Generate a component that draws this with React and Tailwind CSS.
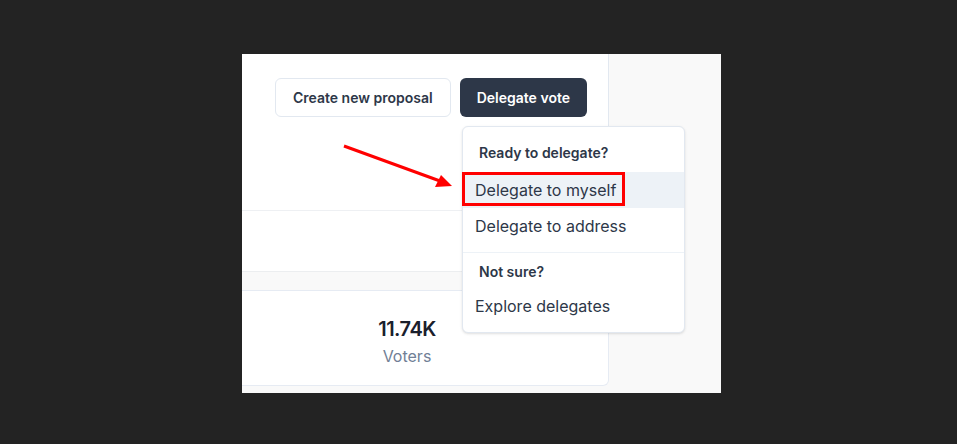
export default function App() {
  return (
    <div
      className="min-h-screen w-full bg-[#232323] pt-[54px] pl-[242px]"
      style={{ fontFamily: 'Inter, "Noto Sans", sans-serif' }}
    >
      <div className="relative flex w-[479px] h-[339px] bg-[#f9f9f9]">
        {/* main column */}
        <div className="flex w-[367px] flex-col">
          <div className="h-[157px] border-r border-b border-r-[#e2e8f0] border-b-[#eef0f3] bg-white">
            <div className="flex justify-end gap-[9px] pt-[24px] pr-[21px]">
              <button className="h-[39px] rounded-[6px] border border-[#e2e8f0] bg-white px-[17px] text-[14px] font-semibold text-[#2d3748]">
                Create new proposal
              </button>
              <button className="h-[39px] rounded-[6px] bg-[#2d3748] px-[17px] text-[14px] font-semibold text-white">
                Delegate vote
              </button>
            </div>
          </div>
          <div className="h-[60px] border-r border-[#e2e8f0] bg-white" />
          <div className="h-[19px] border-t border-[#eceef0] bg-[#f9f9f9]" />
          <div className="flex h-[96px] flex-col items-center justify-center rounded-br-[6px] border-t border-r border-b border-[#e6ebf3] bg-white pt-[6px] pr-[36px]">
            <div className="text-[20px] font-semibold tracking-[-0.5px] text-[#1a202c]">11.74K</div>
            <div className="text-[16px] text-[#718096]">Voters</div>
          </div>
        </div>
        <div className="flex-1" />

        {/* dropdown menu */}
        <div className="absolute left-[220px] top-[72px] w-[223px] rounded-[6px] border border-[#e2e8f0] bg-white py-[8px] shadow-sm">
          <div className="px-[16px] pt-[7px] pb-[9px] text-[14px] font-semibold text-[#2d3748]">
            Ready to delegate?
          </div>
          <div className="flex h-[36px] items-center bg-[#edf2f7] px-[12px] text-[16px] text-[#2d3748]">
            Delegate to myself
          </div>
          <div className="flex h-[36px] items-center px-[12px] text-[16px] text-[#2d3748]">
            Delegate to address
          </div>
          <div className="my-[8px] border-t border-[#edf2f7]" />
          <div className="px-[16px] pb-[6px] text-[14px] font-semibold text-[#2d3748]">
            Not sure?
          </div>
          <div className="flex h-[36px] items-center px-[12px] text-[16px] text-[#2d3748]">
            Explore delegates
          </div>
        </div>

        {/* annotation: highlight box */}
        <div className="pointer-events-none absolute left-[220px] top-[118px] h-[34px] w-[163px] border-[3px] border-[#ff0000]" />

        {/* annotation: arrow */}
        <svg
          className="pointer-events-none absolute left-0 top-0"
          width="479"
          height="339"
          viewBox="0 0 479 339"
        >
          <line x1="102" y1="92" x2="198" y2="127" stroke="#ff0000" strokeWidth="3" />
          <polygon points="210,132 193,133 199,121" fill="#ff0000" />
        </svg>
      </div>
    </div>
  );
}
